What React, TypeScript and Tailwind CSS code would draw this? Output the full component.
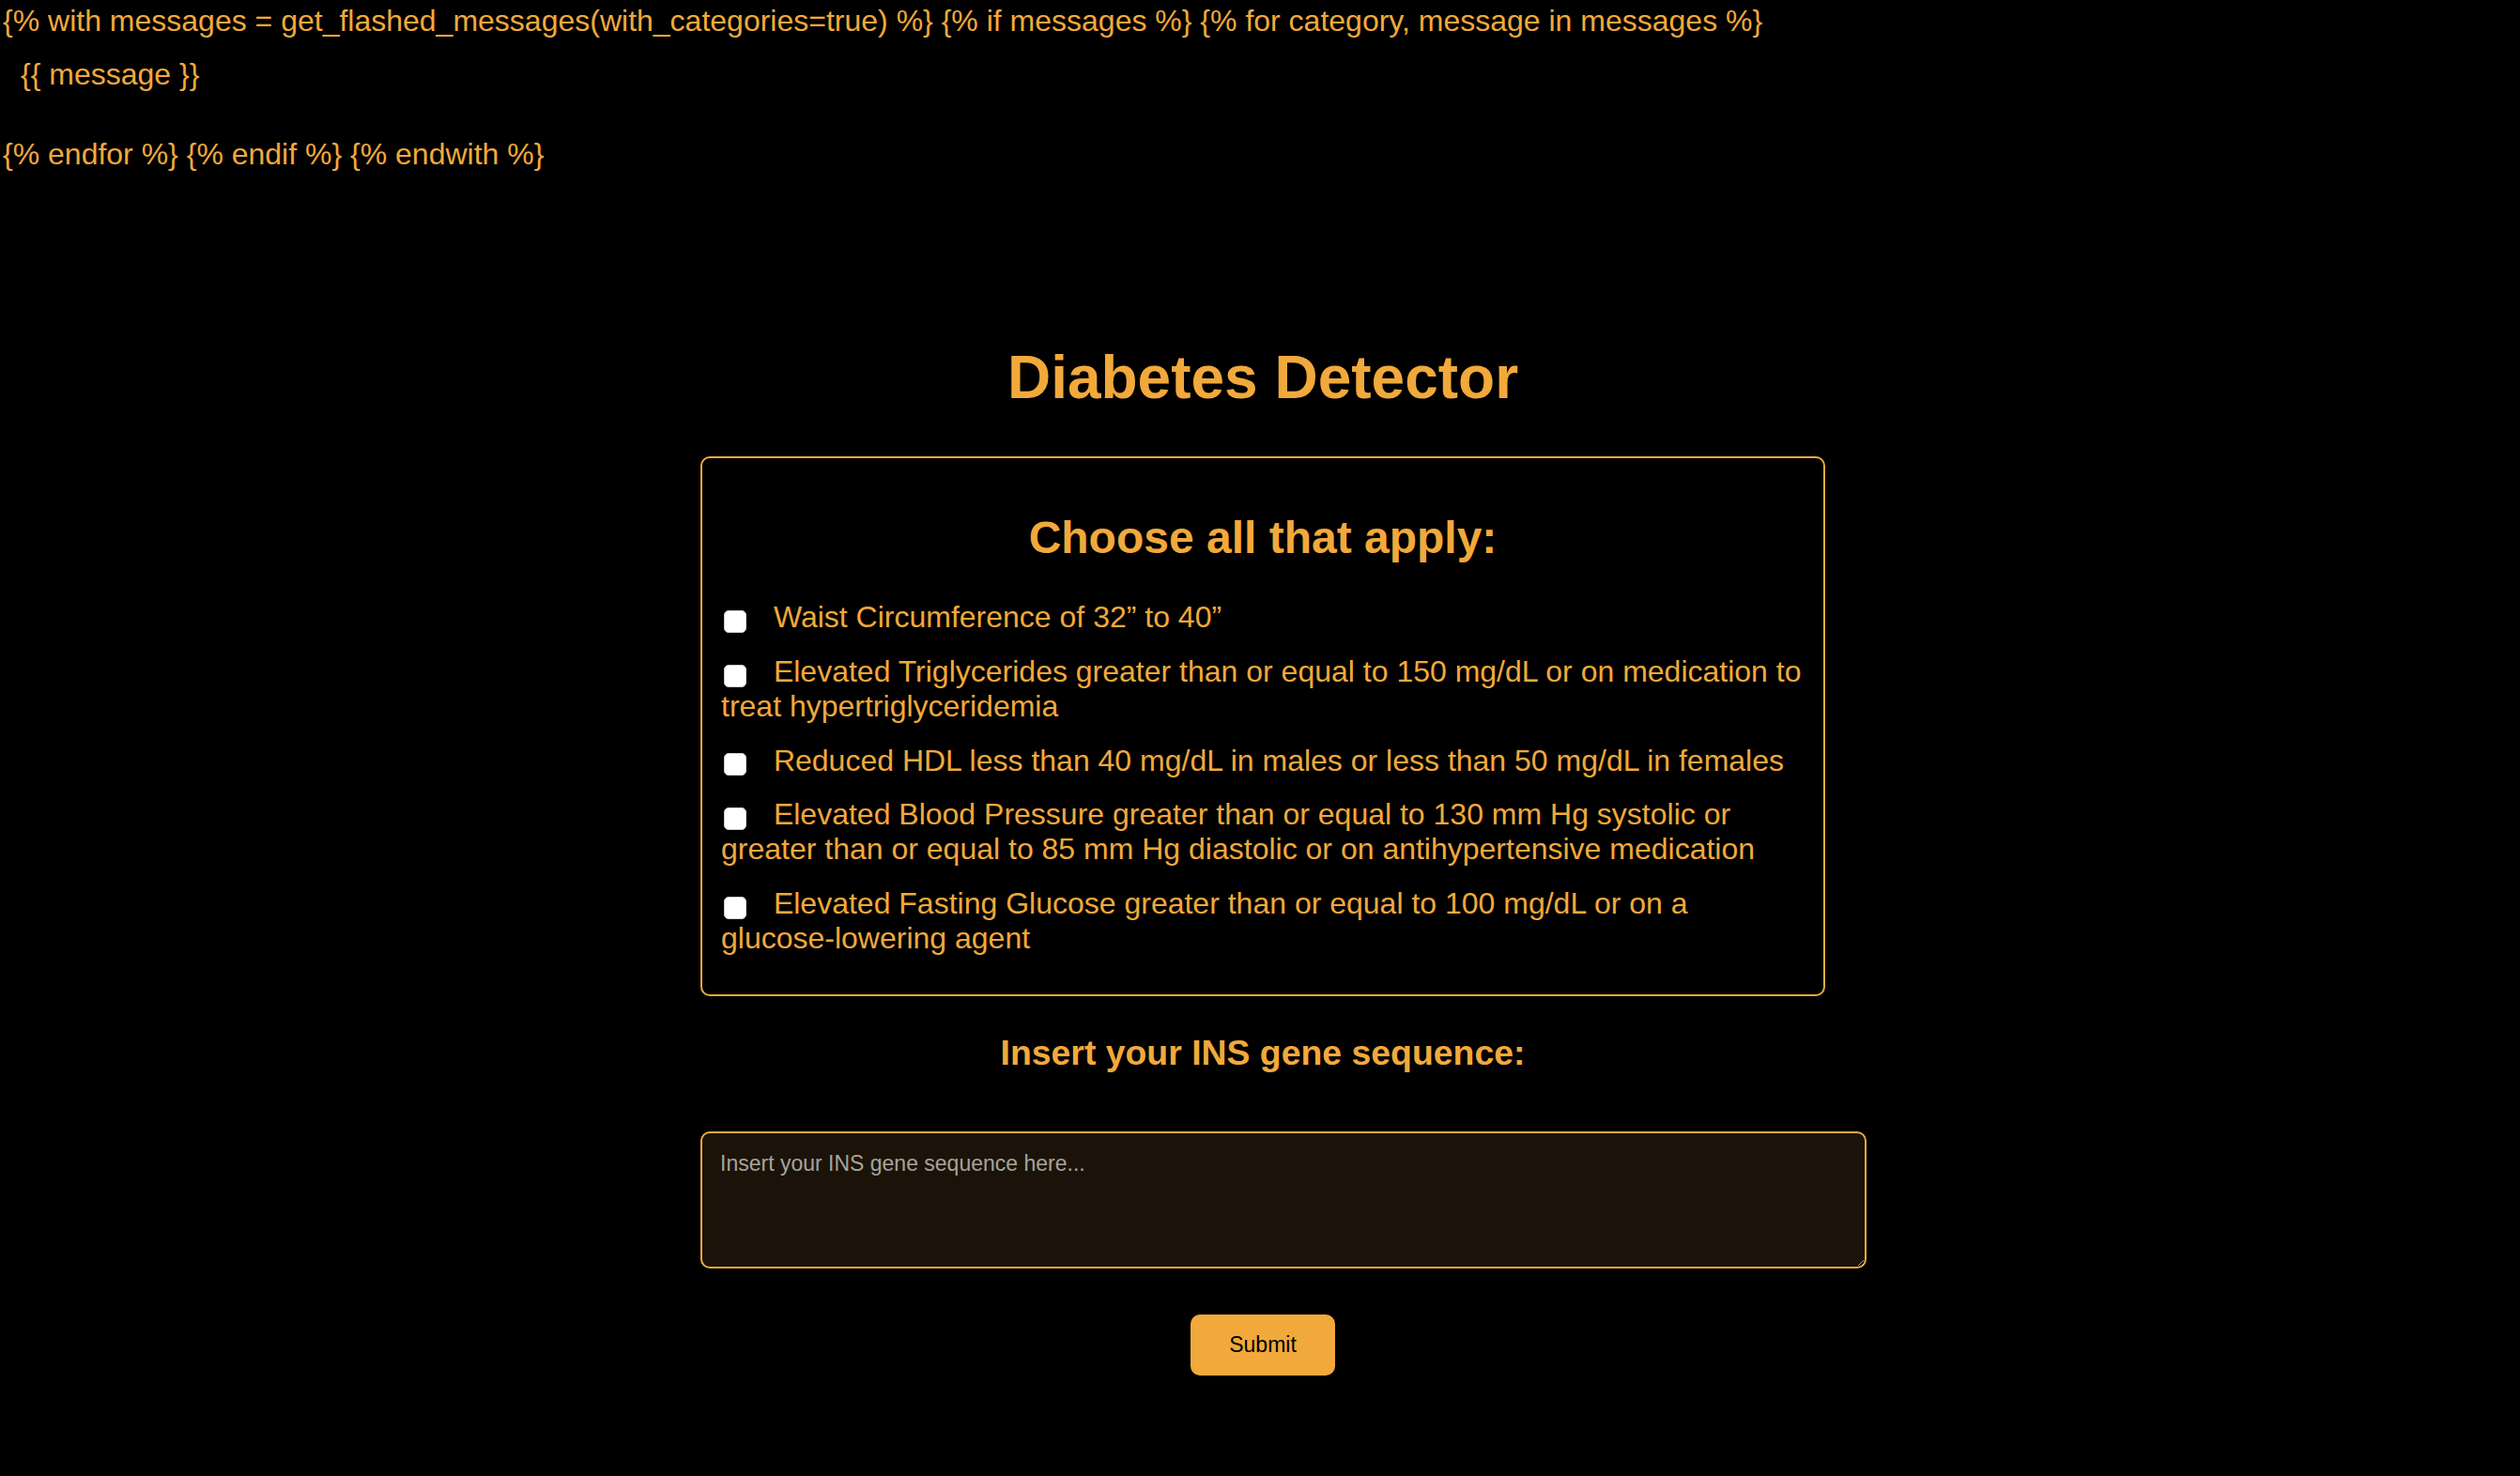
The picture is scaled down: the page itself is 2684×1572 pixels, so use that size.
const criteria = [
  "Waist Circumference of 32\u201D to 40\u201D",
  "Elevated Triglycerides greater than or equal to 150 mg/dL or on medication to treat hypertriglyceridemia",
  "Reduced HDL less than 40 mg/dL in males or less than 50 mg/dL in females",
  "Elevated Blood Pressure greater than or equal to 130 mm Hg systolic or greater than or equal to 85 mm Hg diastolic or on antihypertensive medication",
  "Elevated Fasting Glucose greater than or equal to 100 mg/dL or on a glucose-lowering agent",
];

export default function App() {
  return (
    <div className="min-h-screen bg-black text-[#f1a93b] font-['Liberation_Sans',Arial,sans-serif] text-[32px] leading-[1.15]">
      {/* raw jinja, the template was never rendered */}
      <div className="pl-[3px] pt-[4px]">
        {"{% with messages = get_flashed_messages(with_categories=true) %} {% if messages %} {% for category, message in messages %}"}
      </div>
      <div className="pl-[22px] mt-[20px]">{"{{ message }}"}</div>
      <div className="pl-[3px] mt-[48px]">{"{% endfor %} {% endif %} {% endwith %}"}</div>

      <div className="mx-auto w-[1204px] pl-[6px] pb-[108px]">
        <h1 className="mt-[184px] text-center text-[64px] font-bold">Diabetes Detector</h1>

        <form className="mt-[46px]">
          <div className="border-2 border-[#f1a93b] rounded-[10px] px-[20px] pt-[57px] pb-[41px]">
            <h2 className="text-center text-[48px] font-bold">Choose all that apply:</h2>
            <div className="mt-[39px] flex flex-col gap-[21px]">
              {criteria.map((c, i) => (
                <label key={i} className="block">
                  <input
                    type="checkbox"
                    className="appearance-none inline-block w-[24px] h-[24px] bg-white rounded-[5px] border border-[#cfcfcf] ml-[3px] mr-[20px] align-middle relative top-[2px]"
                  />{" "}
                  {c}
                </label>
              ))}
            </div>
          </div>

          <h3 className="mt-[39px] text-center text-[37.4px] font-bold">Insert your INS gene sequence:</h3>

          <textarea
            placeholder="Insert your INS gene sequence here..."
            className="mt-[62px] block w-[1242px] h-[146px] bg-[#1b1309] border-2 border-[#f1a93b] rounded-[10px] p-[19px] text-[23px] leading-[1.15] text-[#f1a93b] placeholder:text-[#a8a39c] outline-none resize-y"
          />

          <div className="mt-[49px] flex justify-center">
            <button
              type="button"
              className="w-[154px] h-[65px] bg-[#f1a93b] text-black text-[23px] rounded-[10px]"
            >
              Submit
            </button>
          </div>
        </form>
      </div>
    </div>
  );
}
